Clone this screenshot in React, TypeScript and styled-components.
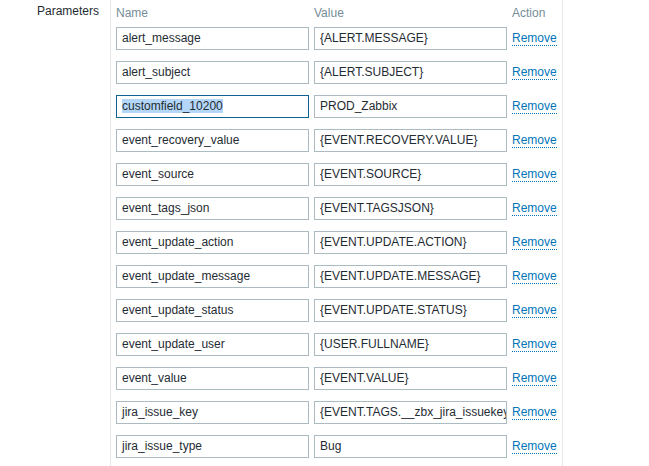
import React from 'react';
import styled, { createGlobalStyle } from 'styled-components';

const GlobalStyle = createGlobalStyle`
  body {
    margin: 0;
    background: #ffffff;
    font-family: 'Liberation Sans', Arial, sans-serif;
    font-size: 12px;
    color: #1f2c33;
  }
`;

const params: Array<[string, string]> = [
  ['alert_message', '{ALERT.MESSAGE}'],
  ['alert_subject', '{ALERT.SUBJECT}'],
  ['customfield_10200', 'PROD_Zabbix'],
  ['event_recovery_value', '{EVENT.RECOVERY.VALUE}'],
  ['event_source', '{EVENT.SOURCE}'],
  ['event_tags_json', '{EVENT.TAGSJSON}'],
  ['event_update_action', '{EVENT.UPDATE.ACTION}'],
  ['event_update_message', '{EVENT.UPDATE.MESSAGE}'],
  ['event_update_status', '{EVENT.UPDATE.STATUS}'],
  ['event_update_user', '{USER.FULLNAME}'],
  ['event_value', '{EVENT.VALUE}'],
  ['jira_issue_key', '{EVENT.TAGS.__zbx_jira_issuekey}'],
  ['jira_issue_type', 'Bug'],
];

const FormRow = styled.div`
  display: flex;
  align-items: flex-start;
  min-height: 466px;
`;

const Label = styled.div`
  width: 110px;
  padding-top: 4px;
  padding-right: 11px;
  box-sizing: border-box;
  text-align: right;
  line-height: 14px;
`;

const Box = styled.div`
  width: 453px;
  box-sizing: border-box;
  min-height: 466px;
  border-left: 1px solid #e3e7ea;
  border-right: 1px solid #e3e7ea;
  padding: 6px 5px 0;
`;

const Grid = styled.div`
  display: grid;
  grid-template-columns: 193px 193px auto;
  column-gap: 5px;
  align-items: center;
`;

const Header = styled(Grid)`
  color: #768d99;
  line-height: 14px;
  margin-bottom: 7px;
`;

const Rows = styled.div`
  display: flex;
  flex-direction: column;
  gap: 11px;
`;

const Field = styled.div<{ $focused?: boolean }>`
  height: 23px;
  box-sizing: border-box;
  border: 1px solid ${({ $focused }) => ($focused ? '#0e6394' : '#acbbc2')};
  padding: 0 5px;
  line-height: 21px;
  white-space: nowrap;
  overflow: hidden;
  background: #ffffff;
`;

const Selected = styled.span`
  background: #b4d6f8;
  line-height: 14px;
  display: inline-block;
`;

const RemoveLink = styled.a`
  color: #0275b8;
  text-decoration: none;
  border-bottom: 1px dotted #0275b8;
  line-height: 14px;
  justify-self: start;
  cursor: pointer;
`;

export default function App() {
  return (
    <>
      <GlobalStyle />
      <FormRow>
        <Label>Parameters</Label>
        <Box>
          <Header>
            <span>Name</span>
            <span>Value</span>
            <span>Action</span>
          </Header>
          <Rows>
            {params.map(([name, value]) => {
              const focused = name === 'customfield_10200';
              return (
                <Grid key={name}>
                  <Field $focused={focused}>
                    {focused ? <Selected>{name}</Selected> : name}
                  </Field>
                  <Field>{value}</Field>
                  <RemoveLink>Remove</RemoveLink>
                </Grid>
              );
            })}
          </Rows>
        </Box>
      </FormRow>
    </>
  );
}
